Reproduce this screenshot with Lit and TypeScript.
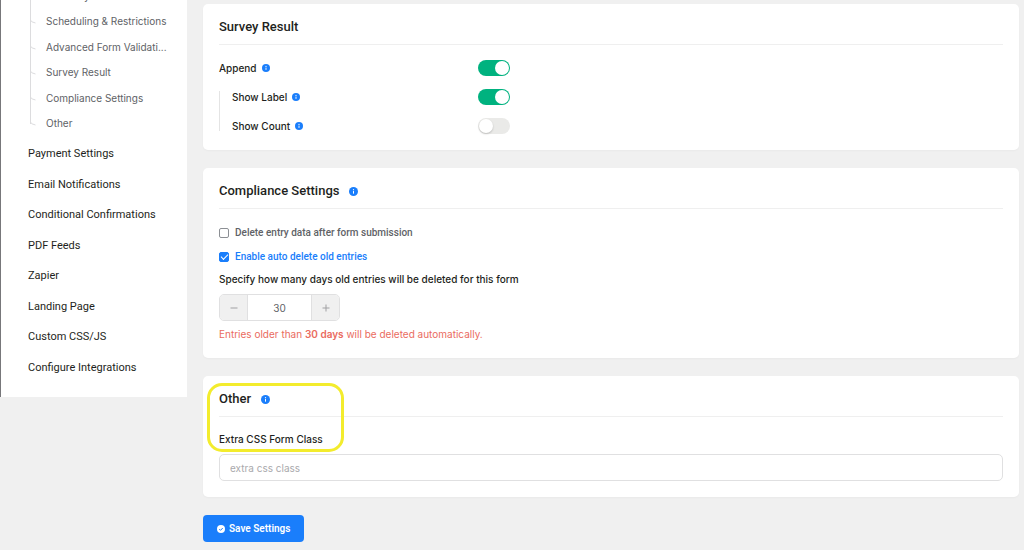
import { LitElement, html, css, svg } from "lit";
import { customElement, property } from "lit/decorators.js";

const SUB_ITEMS = [
  "Form Layout",
  "Scheduling & Restrictions",
  "Advanced Form Validati...",
  "Survey Result",
  "Compliance Settings",
  "Other",
];

const MAIN_ITEMS = [
  "Payment Settings",
  "Email Notifications",
  "Conditional Confirmations",
  "PDF Feeds",
  "Zapier",
  "Landing Page",
  "Custom CSS/JS",
  "Configure Integrations",
];

const branch = svg`<path d="M0.5 0v3q0 2 5 3" fill="none" stroke="#dcdcde" />`;

@customElement("info-icon")
class InfoIcon extends LitElement {
  @property({ type: Number }) size = 8;

  static styles = css`
    :host {
      display: inline-flex;
      flex: none;
    }
  `;

  render() {
    return html`<svg width=${this.size} height=${this.size} viewBox="0 0 16 16" aria-hidden="true">
      <circle cx="8" cy="8" r="8" fill="#1a7efb" />
      <path d="M8 7.2v4.6" stroke="#fff" stroke-width="1.8" />
      <circle cx="8" cy="4.8" r="1.1" fill="#fff" />
    </svg>`;
  }
}

@customElement("settings-nav")
class SettingsNav extends LitElement {
  static styles = css`
    :host {
      display: block;
      background: #fff;
      border-left: 1px solid #77777a;
      padding-bottom: 14px;
    }
    nav {
      margin-top: -17px;
    }
    ul {
      list-style: none;
      margin: 0;
      padding: 0;
      display: grid;
      grid-auto-rows: 1fr;
    }
    li {
      display: flex;
      align-items: center;
    }
    a {
      text-decoration: none;
      white-space: nowrap;
    }
    .sub {
      height: 153px;
      padding-left: 29px;
    }
    .sub li {
      border-left: 1px solid #dcdcde;
      gap: 10px;
    }
    .sub li svg {
      margin-left: -1px;
    }
    .sub li:last-child {
      border-image: linear-gradient(#dcdcde 50%, transparent 50%) 1;
    }
    .sub a {
      font-size: 10px;
      color: #606266;
    }
    .main {
      height: 244px;
      padding-left: 27px;
      margin-top: 3px;
    }
    .main a {
      font-family: Roboto, "Liberation Sans", sans-serif;
      font-size: 11px;
      color: #1e1f21;
    }
  `;

  render() {
    return html`<nav aria-label="Form settings">
      <ul class="sub">
        ${SUB_ITEMS.map(
          (t) => html`<li>
            <svg width="6" height="8" viewBox="0 0 6 8" aria-hidden="true">${branch}</svg>
            <a href="#">${t}</a>
          </li>`
        )}
      </ul>
      <ul class="main">
        ${MAIN_ITEMS.map((t) => html`<li><a href="#">${t}</a></li>`)}
      </ul>
    </nav>`;
  }
}

@customElement("app-root")
class AppRoot extends LitElement {
  static styles = css`
    :host {
      display: block;
      height: 100vh;
      overflow: hidden;
      background: #f0f0f0;
      color: #1e1f21;
      font-family: Inter, "Liberation Sans", sans-serif;
      font-size: 10px;
      line-height: 16px;
    }
    * {
      box-sizing: border-box;
    }
    .page {
      display: grid;
      grid-template-columns: 187px minmax(0, 1fr);
      column-gap: 16px;
      align-items: start;
      padding-right: 5px;
    }
    main {
      padding-top: 4px;
      display: flex;
      flex-direction: column;
      gap: 18px;
    }
    .card {
      background: #fff;
      border-radius: 5px;
      padding: 0 16px 16px;
      box-shadow: 0 1px 2px rgba(0, 0, 0, 0.03);
    }
    .survey {
      padding-bottom: 10px;
    }
    .other {
      position: relative;
    }
    h2 {
      margin: 0;
      height: 41px;
      padding-top: 6px;
      border-bottom: 1px solid #efefef;
      display: flex;
      align-items: center;
      gap: 10px;
      font-family: Roboto, "Liberation Sans", sans-serif;
      font-size: 13px;
      font-weight: 500;
    }
    .row {
      display: grid;
      grid-template-columns: 259px auto;
      justify-content: start;
      align-items: center;
      height: 29px;
    }
    .rows {
      padding-top: 8px;
    }
    .nested {
      position: relative;
    }
    .nested .row {
      padding-left: 13px;
      grid-template-columns: 246px auto;
    }
    .nested::before {
      content: "";
      position: absolute;
      left: 0;
      top: 9px;
      bottom: 9px;
      width: 1px;
      background: #e4e4e4;
    }
    .name {
      display: flex;
      align-items: center;
      gap: 5px;
      font-weight: 500;
    }
    .switch {
      appearance: none;
      margin: 0;
      width: 32px;
      height: 16px;
      border-radius: 8px;
      background: #eaeae8;
      display: flex;
      align-items: center;
      padding: 0 1px;
    }
    .switch::before {
      content: "";
      width: 14px;
      height: 14px;
      border-radius: 50%;
      background: #fff;
      box-shadow: 0 1px 2px rgba(0, 0, 0, 0.2);
    }
    .switch:checked {
      background: #00b27f;
      justify-content: flex-end;
    }
    .switch:checked::before {
      box-shadow: none;
    }
    .checks {
      padding-top: 12px;
    }
    .check {
      display: flex;
      align-items: center;
      gap: 6px;
      height: 24px;
      color: #606266;
      font-family: Roboto, "Liberation Sans", sans-serif;
      font-weight: 500;
    }
    .check.on {
      color: #1a7efb;
    }
    .check input {
      appearance: none;
      margin: 0;
      width: 10px;
      height: 10px;
      border: 1px solid #8c8f94;
      border-radius: 2px;
      background: #fff;
      display: grid;
      place-items: center;
    }
    .check input:checked {
      border-color: #1a7efb;
      background: #1a7efb;
    }
    .check input:checked::before {
      content: "";
      width: 6px;
      height: 3px;
      border: solid #fff;
      border-width: 0 0 1px 1px;
      transform: rotate(-45deg);
      margin-bottom: 2px;
    }
    .field {
      display: block;
      font-weight: 500;
    }
    .compliance .field {
      padding-top: 2px;
    }
    .stepper {
      display: grid;
      grid-template-columns: 27px 65px 27px;
      width: max-content;
      height: 27px;
      margin: 7px 0 5px;
      border: 1px solid #e0e0e1;
      border-radius: 5px;
      overflow: hidden;
    }
    .stepper button {
      border: 0;
      padding: 0;
      background: #f0f0f0;
      display: grid;
      place-items: center;
    }
    .stepper input {
      border: solid #e0e0e1;
      border-width: 0 1px;
      padding: 0;
      width: 100%;
      text-align: center;
      font: inherit;
      color: #606266;
    }
    .warn {
      margin: 0;
      color: #ea6b60;
    }
    .warn b {
      font-weight: 600;
    }
    .other .field {
      padding-top: 14px;
    }
    .text {
      display: block;
      width: 100%;
      height: 27px;
      margin-top: 7px;
      padding: 0 10px;
      border: 1px solid #e0e0e1;
      border-radius: 5px;
      font: inherit;
      color: #606266;
    }
    .text::placeholder {
      color: #a9a9ac;
      opacity: 1;
    }
    .marker {
      position: absolute;
      left: 4px;
      top: 7px;
      width: 137px;
      height: 69px;
      border: 3px solid #f3ec2d;
      border-radius: 15px;
      pointer-events: none;
    }
    .save {
      align-self: flex-start;
      height: 27px;
      padding: 0 14px;
      border: 0;
      border-radius: 4px;
      background: #1a7efb;
      color: #fff;
      font: inherit;
      font-family: Roboto, "Liberation Sans", sans-serif;
      font-weight: 600;
      display: flex;
      align-items: center;
      gap: 4px;
    }
  `;

  private toggle(id: string, label: string, on: boolean) {
    return html`<div class="row">
      <label class="name" for=${id}>${label} <info-icon></info-icon></label>
      <input class="switch" type="checkbox" role="switch" id=${id} .checked=${on} />
    </div>`;
  }

  render() {
    return html`<div class="page">
      <settings-nav></settings-nav>
      <main>
        <section class="card survey">
          <h2>Survey Result</h2>
          <div class="rows">
            ${this.toggle("append", "Append", true)}
            <div class="nested">
              ${this.toggle("show-label", "Show Label", true)}
              ${this.toggle("show-count", "Show Count", false)}
            </div>
          </div>
        </section>

        <section class="card compliance">
          <h2>Compliance Settings <info-icon size="9"></info-icon></h2>
          <div class="checks">
            <label class="check"><input type="checkbox" />Delete entry data after form submission</label>
            <label class="check on"><input type="checkbox" checked />Enable auto delete old entries</label>
          </div>
          <label class="field" for="days">Specify how many days old entries will be deleted for this form</label>
          <div class="stepper">
            <button type="button" aria-label="Decrease">
              <svg width="8" height="8"><path d="M0.5 4h7" stroke="#a0a0a3" /></svg>
            </button>
            <input id="days" type="text" inputmode="numeric" value="30" />
            <button type="button" aria-label="Increase">
              <svg width="8" height="8"><path d="M0.5 4h7M4 0.5v7" stroke="#a0a0a3" /></svg>
            </button>
          </div>
          <p class="warn">Entries older than <b>30 days</b> will be deleted automatically.</p>
        </section>

        <section class="card other">
          <h2>Other <info-icon size="9"></info-icon></h2>
          <label class="field" for="css-class">Extra CSS Form Class</label>
          <input class="text" id="css-class" type="text" placeholder="extra css class" />
          <div class="marker"></div>
        </section>

        <button class="save" type="button">
          <svg width="8" height="8" viewBox="0 0 16 16" aria-hidden="true">
            <circle cx="8" cy="8" r="8" fill="#fff" />
            <path d="M4.5 8.2l2.5 2.5 4.5-4.7" fill="none" stroke="#1a7efb" stroke-width="2" />
          </svg>
          Save Settings
        </button>
      </main>
    </div>`;
  }
}
